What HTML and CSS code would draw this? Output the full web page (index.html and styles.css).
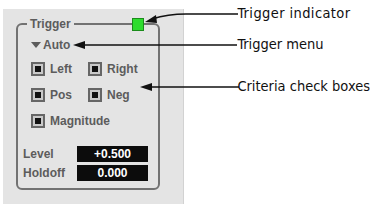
FILE: index.html
```html
<!DOCTYPE html>
<html lang="en">
<head>
    <meta charset="UTF-8">
    <meta name="viewport" content="width=device-width, initial-scale=1.0">
    <title>Trigger panel</title>
    <link rel="stylesheet" href="styles.css">
</head>
<body>
    <div class="panel">
        <span class="indicator"></span>
        <fieldset class="trigger">
            <legend>Trigger</legend>
            <div class="menu"><span class="caret"></span>Auto</div>
            <div class="options">
                <label class="check"><span class="box"></span>Left</label>
                <label class="check"><span class="box"></span>Right</label>
                <label class="check"><span class="box"></span>Pos</label>
                <label class="check"><span class="box"></span>Neg</label>
                <label class="check wide"><span class="box"></span>Magnitude</label>
            </div>
            <div class="fields">
                <div class="field">
                    <span class="name">Level</span>
                    <span class="value">+0.500</span>
                </div>
                <div class="field">
                    <span class="name">Holdoff</span>
                    <span class="value">0.000</span>
                </div>
            </div>
        </fieldset>
    </div>

    <div class="notes">
        <div class="note first">Trigger indicator</div>
        <div class="note second">Trigger menu</div>
        <div class="note third">Criteria check boxes</div>
    </div>

    <svg class="arrows" width="370" height="204" viewBox="0 0 370 204">
        <path d="M238 14 L186 14 Q168 14 152 19" fill="none" stroke="#111" stroke-width="1.5"/>
        <polygon points="145,22 156,15 157,23" fill="#111"/>
        <line x1="82" y1="45" x2="237" y2="45" stroke="#111" stroke-width="1.5"/>
        <polygon points="73,45 85,41 85,49" fill="#111"/>
        <line x1="149" y1="87" x2="239" y2="87" stroke="#111" stroke-width="1.5"/>
        <polygon points="140,87 152,83 152,91" fill="#111"/>
    </svg>
</body>
</html>
```

FILE: styles.css
```css
body {
    margin: 0;
    background: white;
    display: flex;
    height: 204px;
    overflow: hidden;
    position: relative;
    font-family: "Liberation Sans", Arial, sans-serif;
}

.panel {
    position: relative;
    margin: 9px 0 0 3px;
    width: 183px;
    background: #e4e4e4;
    border-right: 1px solid #d2d2d2;
    padding: 8px 0 0 13px;
    box-sizing: border-box;
}

.indicator {
    position: absolute;
    left: 129px;
    top: 9px;
    width: 12px;
    height: 13px;
    box-sizing: border-box;
    background: #2fdc2f;
    border: 1px solid #1b8c1b;
}

.trigger {
    margin: 0;
    width: 144px;
    box-sizing: border-box;
    border: 2px solid #727272;
    border-radius: 6px;
    padding: 7px 8px 7px 5px;
    color: #5c5c5c;
    font-size: 12px;
    font-weight: bold;
}

.trigger legend {
    padding: 0 3px;
    margin-left: 4px;
    line-height: 14px;
}

.menu {
    display: flex;
    align-items: center;
    gap: 2px;
    height: 14px;
    padding-left: 8px;
}

.caret {
    width: 0;
    height: 0;
    border-left: 5px solid transparent;
    border-right: 5px solid transparent;
    border-top: 6px solid #5c5c5c;
}

.options {
    display: grid;
    grid-template-columns: 57px auto;
    row-gap: 12px;
    margin: 10px 0 0 8px;
}

.check {
    display: flex;
    align-items: center;
    gap: 5px;
    height: 14px;
}

.wide {
    grid-column: 1 / 3;
}

.box {
    width: 14px;
    height: 14px;
    box-sizing: border-box;
    border: 2px solid #666;
    background: #111;
    box-shadow: inset 0 0 0 2px #c9c9c9;
}

.fields {
    display: flex;
    flex-direction: column;
    gap: 3px;
    margin-top: 18px;
}

.field {
    display: flex;
    align-items: center;
}

.name {
    width: 54px;
}

.value {
    width: 71px;
    height: 16px;
    line-height: 16px;
    background: #0c0c0c;
    color: white;
    text-align: center;
}

.notes {
    margin-left: 53px;
    padding-top: 4px;
    font-family: "DejaVu Sans Condensed", "DejaVu Sans", sans-serif;
    font-stretch: condensed;
    font-size: 14.5px;
    line-height: 18px;
    color: #111;
    white-space: nowrap;
}

.first {
    letter-spacing: 0.4px;
}

.second {
    margin-top: 13px;
}

.third {
    margin-top: 24px;
}

.arrows {
    position: absolute;
    left: 0;
    top: 0;
    pointer-events: none;
}
```
